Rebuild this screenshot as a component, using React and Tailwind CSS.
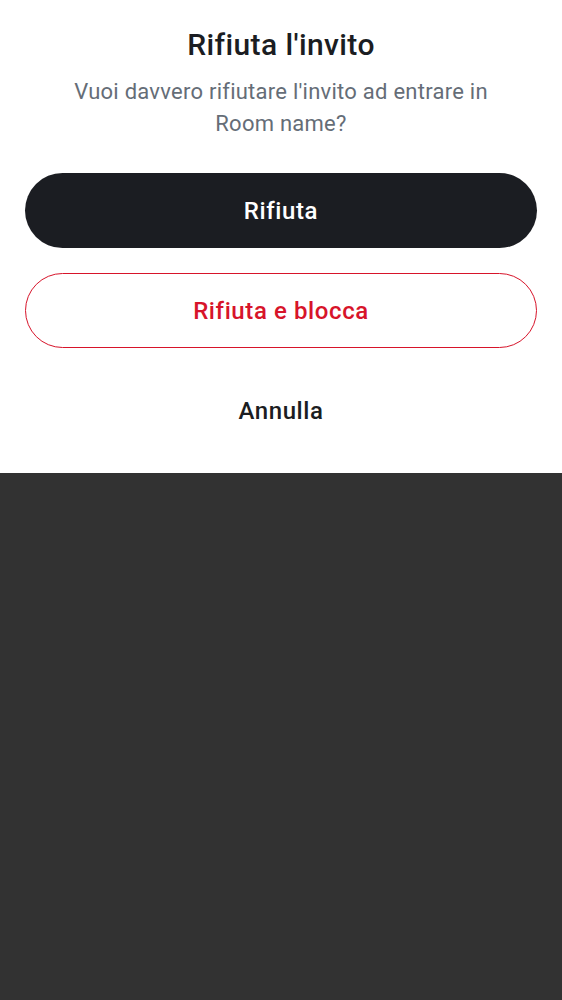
import React from 'react';

const App = () => {
  return (
    <div className="min-h-screen bg-[#323232] font-['Roboto',sans-serif]">
      <div className="bg-white px-[25px] pt-[28px] pb-[25px] flex flex-col items-center">
        <h1 className="text-[30px] leading-[34px] font-medium tracking-[0.4px] text-[#1b1d22] text-center">Rifiuta l'invito</h1>
        <p className="mt-[14px] w-[440px] text-[22px] leading-[32px] tracking-[0.25px] text-[#656d77] text-center">
          Vuoi davvero rifiutare l'invito ad entrare in Room name?
        </p>

        <div className="mt-[33px] w-full flex flex-col gap-[25px]">
          <button className="h-[75px] w-full rounded-full bg-[#1b1d22] text-white text-[24px] font-medium tracking-[0.6px]">
            Rifiuta
          </button>
          <button className="h-[75px] w-full rounded-full border border-[#d7142a] bg-white text-[#d7142a] text-[24px] font-medium tracking-[0.6px]">
            Rifiuta e blocca
          </button>
          <button className="h-[75px] w-full rounded-full text-[#1b1d22] text-[24px] font-medium tracking-[0.6px]">
            Annulla
          </button>
        </div>
      </div>
    </div>
  );
};

export default App;
